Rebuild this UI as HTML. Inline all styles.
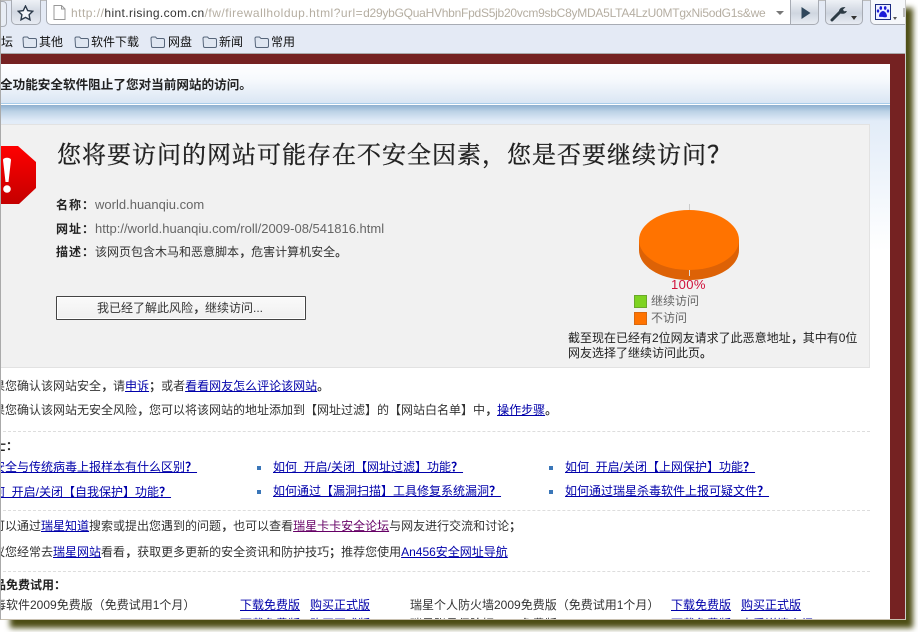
<!DOCTYPE html>
<html lang="zh">
<head>
<meta charset="utf-8">
<title>Rising</title>
<style>
html,body{margin:0;padding:0;background:#fff;}
body{width:918px;height:632px;position:relative;overflow:hidden;font-family:"Liberation Sans","WenQuanYi Zen Hei","Noto Sans CJK SC",sans-serif;font-size:12px;color:#333;}
.a{position:absolute;white-space:nowrap;line-height:16px;}
a{color:#00a;text-decoration:underline;}
a.v{color:#606;}
b{font-weight:bold;color:#222;letter-spacing:1px;}
.p{font-family:"Noto Sans CJK TC",sans-serif;font-weight:bold;}
.dash{position:absolute;left:2px;width:867px;border-top:1px dashed #ddd;height:0;}
.sq{position:absolute;width:4px;height:4px;background:#3a76b8;}
.folder{position:absolute;top:35px;}
.bm{top:34px;color:#111;}
.g{color:#666;}
.u{font-size:13px;color:#666;letter-spacing:0;}
</style>
</head>
<body>
<div style="position:absolute;left:10px;top:8px;width:903px;height:620px;background:#4c4d14;filter:blur(3px);"></div>
<div id="win" style="position:absolute;left:0;top:0;width:904px;height:619px;background:#fff;overflow:hidden;border-left:1px solid #aaa;border-right:1px solid #ccc;border-bottom:1px solid #c8c0b0;box-sizing:content-box;">

 <div style="position:absolute;left:0;top:0;width:905px;height:53px;background:#e4eaf5;border-top:1px solid #bbb;box-sizing:border-box;"></div>
 <div style="position:absolute;left:0;top:53px;width:905px;height:1px;background:#a9a9a9;"></div>

 <div style="position:absolute;left:-6px;top:1px;width:10px;height:24px;border:1px solid #a8acb4;border-radius:4px;background:#e8edf5;"></div>
 <div style="position:absolute;left:10px;top:0;width:28px;height:24px;border:1px solid #a8acb4;border-top:0;border-radius:0 0 5px 5px;background:linear-gradient(#eef1f6,#d2d8e2 50%,#e8ecf3);"></div>
 <svg style="position:absolute;left:16px;top:5px" width="17" height="16" viewBox="0 0 17 16"><path d="M8.500 1l2.200 4.600 5 .7-3.600 3.500.9 5-4.500-2.400L4 14.800l.9-5L1.300 6.300l5-.7z" fill="#f4f6fa" stroke="#2c3a4a" stroke-width="1.400"/></svg>

 <div style="position:absolute;left:45px;top:0;width:745px;height:25px;background:#fff;border:1px solid #a8acb4;border-top:0;border-radius:0 0 0 5px;box-sizing:border-box;"></div>
 <svg style="position:absolute;left:52px;top:5px" width="13" height="15" viewBox="0 0 13 15"><path d="M1 .5h7.500l3.500 3.500v10.500H1z" fill="#fff" stroke="#999"/><path d="M8.500.5v3.500H12" fill="none" stroke="#999"/></svg>
 <div class="a" style="left:70px;top:5px;font-size:12px;letter-spacing:.48px;width:701px;overflow:hidden;color:#b5aea2;line-height:17px;">http://<span style="color:#333;letter-spacing:.38px">hint.rising.com.cn</span>/fw/firewallholdup.html?url=<span style="letter-spacing:-.25px">d29ybGQuaHVhbnFpdS5jb20vcm9sbC8yMDA5LTA4LzU0MTgxNi5odG1s&amp;we</span></div>
 <div style="position:absolute;left:775px;top:11px;width:0;height:0;border:4px solid transparent;border-top:4px solid #777;"></div>

 <div style="position:absolute;left:789px;top:0;width:29px;height:25px;border:1px solid #a8acb4;border-top:0;border-radius:0 0 5px 0;background:linear-gradient(#f2f4f8,#cfd6e0 55%,#e8ecf3);box-sizing:border-box;"></div>
 <svg style="position:absolute;left:799px;top:6px" width="12" height="14" viewBox="0 0 12 14"><path d="M1.500 1v12l9-6z" fill="#30475c"/></svg>

 <div style="position:absolute;left:824px;top:0;width:38px;height:25px;border:1px solid #a8acb4;border-top:0;border-radius:0 0 5px 5px;background:linear-gradient(#eef1f6,#cdd4df 55%,#e8ecf3);box-sizing:border-box;"></div>
 <svg style="position:absolute;left:829px;top:4px" width="20" height="18" viewBox="0 0 20 18"><path d="M2 16l8-8" stroke="#2c3a44" stroke-width="3" stroke-linecap="round"/><path d="M9 8.500c-.6-3.500 2.400-6 6.500-5.300l-2.500 2.300 1 1.800 2.800-.3C16.500 9.500 12 11 9 8.500z" fill="#2c3a44"/></svg>
 <div style="position:absolute;left:850px;top:16px;width:0;height:0;border:3px solid transparent;border-top:4px solid #333;"></div>

 <div style="position:absolute;left:869px;top:0;width:40px;height:25px;border:1px solid #a8acb4;border-top:0;border-right:0;border-radius:0 0 0 5px;background:#f6f8fb;box-sizing:border-box;"></div>
 <div style="position:absolute;left:874px;top:4px;width:16px;height:16px;background:#eef0ff;border:1px solid #1a2a80;box-sizing:border-box;"></div>
 <svg style="position:absolute;left:875px;top:5px" width="14" height="14" viewBox="0 0 14 14" fill="#1c1cd8"><ellipse cx="4.800" cy="3" rx="1.300" ry="1.900"/><ellipse cx="9.200" cy="3" rx="1.300" ry="1.900"/><ellipse cx="2" cy="6" rx="1.200" ry="1.600"/><ellipse cx="12" cy="6" rx="1.200" ry="1.600"/><path d="M7 6c2 0 4 3 4 5 0 1.500-2 1.500-4 1s-4 .500-4-1c0-2 2-5 4-5z"/></svg>
 <div style="position:absolute;left:892px;top:17px;width:0;height:0;border:2px solid transparent;border-top:3px solid #555;"></div>
 <div style="position:absolute;left:902px;top:8px;width:2px;height:9px;background:#bbb;"></div>

 <div class="a bm" style="left:0;">坛</div>
 <svg class="folder" style="left:21px" width="15" height="13" viewBox="0 0 15 13"><path d="M1 3.500c0-1 .5-1.500 1.500-1.500h3l1.500 1.500h6c1 0 1.500.5 1.500 1.500v6c0 1-.5 1.500-1.500 1.500h-10c-1 0-1.500-.5-1.500-1.500z" fill="#dfe6f1" stroke="#56657a"/></svg><div class="a bm" style="left:38px;">其他</div>
 <svg class="folder" style="left:73px" width="15" height="13" viewBox="0 0 15 13"><path d="M1 3.500c0-1 .5-1.500 1.500-1.500h3l1.500 1.500h6c1 0 1.500.5 1.500 1.500v6c0 1-.5 1.500-1.500 1.500h-10c-1 0-1.500-.5-1.500-1.500z" fill="#dfe6f1" stroke="#56657a"/></svg><div class="a bm" style="left:90px;">软件下载</div>
 <svg class="folder" style="left:149px" width="15" height="13" viewBox="0 0 15 13"><path d="M1 3.500c0-1 .5-1.500 1.500-1.500h3l1.500 1.500h6c1 0 1.500.5 1.500 1.500v6c0 1-.5 1.500-1.500 1.500h-10c-1 0-1.500-.5-1.500-1.500z" fill="#dfe6f1" stroke="#56657a"/></svg><div class="a bm" style="left:167px;">网盘</div>
 <svg class="folder" style="left:201px" width="15" height="13" viewBox="0 0 15 13"><path d="M1 3.500c0-1 .5-1.500 1.500-1.500h3l1.500 1.500h6c1 0 1.500.5 1.500 1.500v6c0 1-.5 1.500-1.500 1.500h-10c-1 0-1.500-.5-1.500-1.500z" fill="#dfe6f1" stroke="#56657a"/></svg><div class="a bm" style="left:218px;">新闻</div>
 <svg class="folder" style="left:253px" width="15" height="13" viewBox="0 0 15 13"><path d="M1 3.500c0-1 .5-1.500 1.500-1.500h3l1.500 1.500h6c1 0 1.500.5 1.500 1.500v6c0 1-.5 1.500-1.500 1.500h-10c-1 0-1.500-.5-1.500-1.500z" fill="#dfe6f1" stroke="#56657a"/></svg><div class="a bm" style="left:270px;">常用</div>

 <div style="position:absolute;left:0;top:54px;width:905px;height:565px;background:#752222;"></div>
 <div style="position:absolute;left:0;top:64px;width:889px;height:555px;background:#fff;overflow:hidden;">
  <div style="position:absolute;left:0;top:0;width:889px;height:40px;background:linear-gradient(#fff 0%,#f6f9fd 40%,#d9e5f3 100%);"></div>
  <div style="position:absolute;left:0;top:39px;width:889px;height:1px;background:#a9cdea;"></div>
  <div style="position:absolute;left:0;top:40px;width:889px;height:1px;background:#fff;"></div>
  <div style="position:absolute;left:0;top:41px;width:889px;height:16px;background:linear-gradient(#8eafcf 0%,#bcd2e6 40%,#e2ecf8 100%);"></div>
  <div style="position:absolute;left:0;top:57px;width:889px;height:130px;background:linear-gradient(#e2ecf8,#fff);"></div>
 </div>

 <div class="a" style="left:-1px;top:76px;font-size:12.600px;font-weight:bold;color:#222;">全功能安全软件阻止了您对当前网站的访问<span class="p">。</span></div>

 <div style="position:absolute;left:0;top:124px;width:868px;height:242px;background:#f1f1f1;border:1px solid #e2e2e2;border-left:0;box-sizing:content-box;"></div>

 <svg style="position:absolute;left:0;top:146px" width="37" height="60" viewBox="0 0 37 60">
  <defs><linearGradient id="r" x1="0" y1="0" x2="0" y2="1"><stop offset="0" stop-color="#ff0000"/><stop offset="1" stop-color="#c40000"/></linearGradient></defs>
  <path d="M0 0h17l18 16v26L18 58H0z" fill="url(#r)"/>
  <path d="M2 14c0-3 8-3 8 0l-2.500 22h-3z" fill="#fff"/>
  <circle cx="6" cy="43" r="3.800" fill="#fff"/>
 </svg>

 <div class="a" style="left:56px;top:138px;font-size:24px;letter-spacing:1px;line-height:30px;font-family:'Liberation Serif','Noto Serif CJK SC',serif;color:#222;-webkit-text-stroke:.35px #222;">您将要访问的网站可能存在不安全因素<span style="font-family:'Noto Serif CJK TC','Noto Sans CJK TC',serif">，</span>您是否要继续访问<span style="font-family:'Noto Sans CJK TC',serif">？</span></div>

 <div class="a" style="left:55px;top:197px;"><b>名称<span class="p">：</span></b><span class="u">world.huanqiu.com</span></div>
 <div class="a" style="left:55px;top:221px;"><b>网址<span class="p">：</span></b><span class="u">http://world.huanqiu.com/roll/2009-08/541816.html</span></div>
 <div class="a" style="left:55px;top:244px;"><b>描述<span class="p">：</span></b>该网页包含木马和恶意脚本<span class="p">，</span>危害计算机安全<span class="p">。</span></div>

 <div style="position:absolute;left:55px;top:296px;width:250px;height:24px;border:1px solid #444;border-radius:1px;background:linear-gradient(#fafafa,#f0f0f0);box-sizing:border-box;text-align:center;line-height:22px;color:#333;padding-right:2px;box-shadow:inset 0 0 0 1px #fff;">我已经了解此风险<span class="p">，</span>继续访问...</div>

 <svg style="position:absolute;left:630px;top:200px" width="120" height="90" viewBox="0 0 120 90">
  <path d="M58.500 4v10" stroke="#ccc" stroke-width="1"/>
  <path d="M8 40v10c0 17 22 30 50 30s50-13 50-30V40z" fill="#dd6206"/>
  <ellipse cx="58" cy="40" rx="50" ry="30" fill="#ff7300"/>
  <path d="M58.500 70v6" stroke="#ddd" stroke-width="1"/>
 </svg>
 <div class="a" style="left:670px;top:277px;font-size:13px;letter-spacing:.4px;color:#d0103a;">100%</div>

 <div style="position:absolute;left:633px;top:295px;width:13px;height:13px;background:#7ed321;border:1px solid #6aa82a;box-sizing:border-box;"></div>
 <div class="a g" style="left:650px;top:293px;">继续访问</div>
 <div style="position:absolute;left:633px;top:312px;width:13px;height:13px;background:#ff7300;border:1px solid #d8680f;box-sizing:border-box;"></div>
 <div class="a g" style="left:650px;top:310px;">不访问</div>

 <div class="a" style="left:567px;top:330px;color:#222;">截至现在已经有2位网友请求了此恶意地址<span class="p">，</span>其中有0位</div>
 <div class="a" style="left:567px;top:345px;color:#222;">网友选择了继续访问此页<span class="p">。</span></div>

 <div class="a" style="left:-8px;top:378px;">果您确认该网站安全<span class="p">，</span>请<a href="#">申诉</a><span class="p">；</span>或者<a href="#">看看网友怎么评论该网站</a><span class="p">。</span></div>
 <div class="a" style="left:-8px;top:402px;">果您确认该网站无安全风险<span class="p">，</span>您可以将该网站的地址添加到【网址过滤】的【网站白名单】中<span class="p">，</span><a href="#">操作步骤</a><span class="p">。</span></div>

 <div class="dash" style="top:431px;"></div>
 <div class="a" style="left:-7px;top:438px;"><b style="letter-spacing:0">士<span class="p">：</span></b></div>

 <div class="a" style="left:-8px;top:459px;"><a href="#">安全与传统病毒上报样本有什么区别<span class="p">？</span></a></div>
 <div class="a" style="left:-8px;top:484px;"><a href="#">何&nbsp;&nbsp;开启/关闭【自我保护】功能<span class="p">？</span></a></div>
 <div class="sq" style="left:256px;top:466px;"></div>
 <div class="sq" style="left:256px;top:490px;"></div>
 <div class="a" style="left:272px;top:459px;"><a href="#">如何&nbsp;&nbsp;开启/关闭【网址过滤】功能<span class="p">？</span></a></div>
 <div class="a" style="left:272px;top:483px;"><a href="#">如何通过【漏洞扫描】工具修复系统漏洞<span class="p">？</span></a></div>
 <div class="sq" style="left:548px;top:466px;"></div>
 <div class="sq" style="left:548px;top:490px;"></div>
 <div class="a" style="left:564px;top:459px;"><a href="#">如何&nbsp;&nbsp;开启/关闭【上网保护】功能<span class="p">？</span></a></div>
 <div class="a" style="left:564px;top:483px;"><a href="#">如何通过瑞星杀毒软件上报可疑文件<span class="p">？</span></a></div>

 <div class="dash" style="top:510px;"></div>
 <div class="a" style="left:-8px;top:518px;">可以通过<a href="#">瑞星知道</a>搜索或提出您遇到的问题<span class="p">，</span>也可以查看<a class="v" href="#">瑞星卡卡安全论坛</a>与网友进行交流和讨论<span class="p">；</span></div>
 <div class="a" style="left:-8px;top:544px;">议您经常去<a href="#">瑞星网站</a>看看<span class="p">，</span>获取更多更新的安全资讯和防护技巧<span class="p">；</span>推荐您使用<a href="#">An456安全网址导航</a></div>

 <div class="dash" style="top:571px;"></div>
 <div class="a" style="left:-7px;top:577px;"><b style="letter-spacing:0">品免费试用<span class="p">：</span></b></div>
 <div class="a" style="left:-7px;top:597px;">毒软件2009免费版（免费试用1个月）</div>
 <div class="a" style="left:239px;top:597px;"><a href="#">下载免费版</a></div>
 <div class="a" style="left:309px;top:597px;"><a href="#">购买正式版</a></div>
 <div class="a" style="left:409px;top:597px;">瑞星个人防火墙2009免费版（免费试用1个月）</div>
 <div class="a" style="left:670px;top:597px;"><a href="#">下载免费版</a></div>
 <div class="a" style="left:740px;top:597px;"><a href="#">购买正式版</a></div>
 <div class="a" style="left:239px;top:616px;"><a href="#">下载免费版</a></div>
 <div class="a" style="left:309px;top:616px;"><a href="#">购买正式版</a></div>
 <div class="a" style="left:409px;top:616px;">瑞星账号保险柜2009免费版</div>
 <div class="a" style="left:670px;top:616px;"><a href="#">下载免费版</a></div>
 <div class="a" style="left:740px;top:616px;"><a href="#">查看详情介绍</a></div>

 <div style="position:absolute;left:0;top:619px;width:905px;height:1px;background:#c8c0b0;"></div>
</div>
</body>
</html>
